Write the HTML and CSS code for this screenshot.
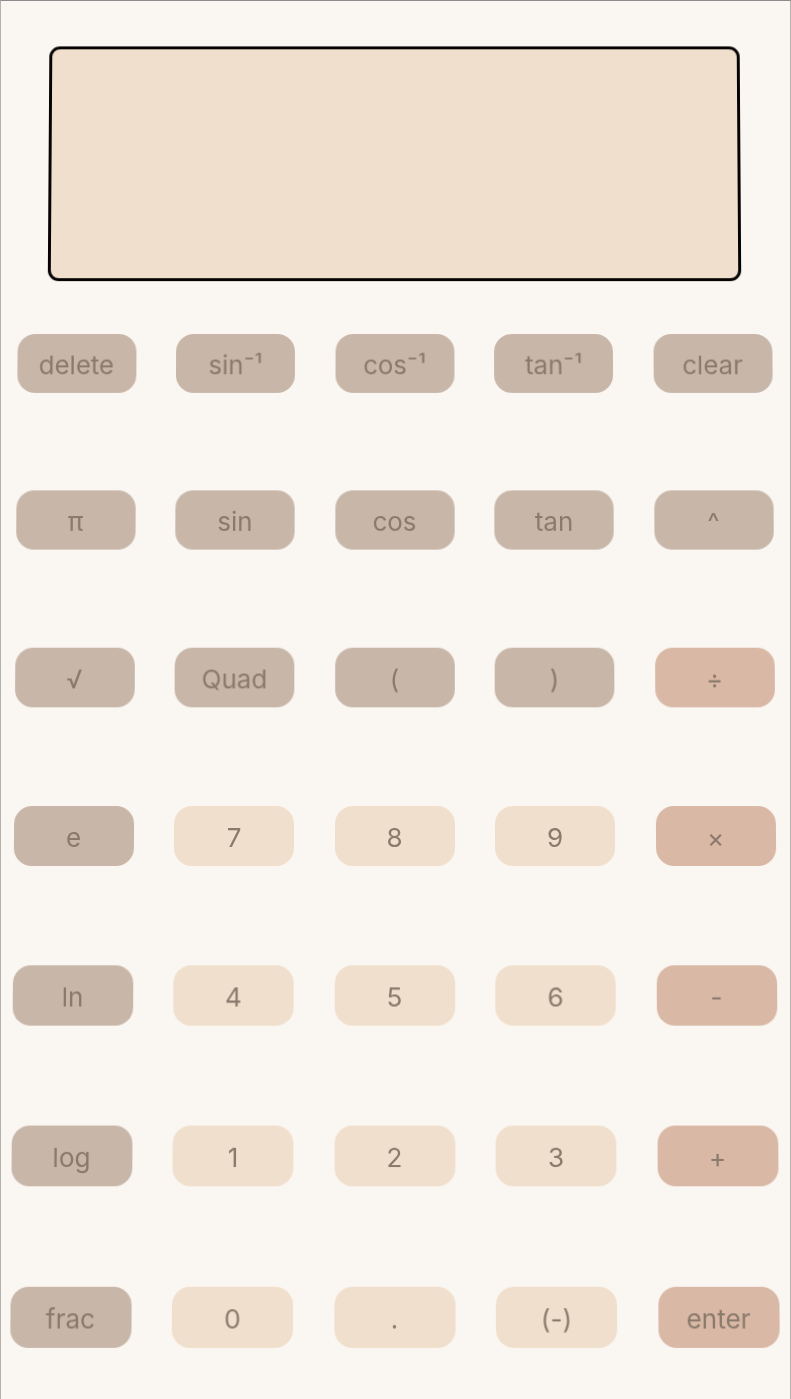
FILE: index.html
```html
<!DOCTYPE html>
<html lang="en">
<head>
<meta charset="utf-8">
<title>Calculator</title>
<link rel="stylesheet" href="styles.css">
</head>
<body>
<main class="calc">
  <section class="display"></section>
  <section class="keys">
    <button class="key fn">delete</button>
    <button class="key fn">sin⁻¹</button>
    <button class="key fn">cos⁻¹</button>
    <button class="key fn">tan⁻¹</button>
    <button class="key fn">clear</button>

    <button class="key fn">π</button>
    <button class="key fn">sin</button>
    <button class="key fn">cos</button>
    <button class="key fn">tan</button>
    <button class="key fn">^</button>

    <button class="key fn">√</button>
    <button class="key fn">Quad</button>
    <button class="key fn">(</button>
    <button class="key fn">)</button>
    <button class="key op">÷</button>

    <button class="key fn">e</button>
    <button class="key num">7</button>
    <button class="key num">8</button>
    <button class="key num">9</button>
    <button class="key op">×</button>

    <button class="key fn">ln</button>
    <button class="key num">4</button>
    <button class="key num">5</button>
    <button class="key num">6</button>
    <button class="key op">-</button>

    <button class="key fn">log</button>
    <button class="key num">1</button>
    <button class="key num">2</button>
    <button class="key num">3</button>
    <button class="key op">+</button>

    <button class="key fn">frac</button>
    <button class="key num">0</button>
    <button class="key num">.</button>
    <button class="key num">(-)</button>
    <button class="key op">enter</button>
  </section>
</main>
</body>
</html>
```

FILE: styles.css
```css
html, body {
  margin: 0;
  padding: 0;
}

body {
  width: 791px;
  height: 1399px;
  box-sizing: border-box;
  background: #faf6f1;
  border-top: 1px solid #8c8c8c;
  border-left: 1px solid #b5b2ae;
  border-right: 1px solid #b5b2ae;
  overflow: hidden;
  font-family: "Inter", "Liberation Sans", sans-serif;
}

.calc {
  display: flex;
  flex-direction: column;
  align-items: center;
  padding-top: 33px;
  padding-right: 2px;
  height: 1398px;
  box-sizing: border-box;
  transform-origin: 50% 835px;
  transform: perspective(1000px) rotateX(1.11deg);
}

.display {
  width: 701px;
  height: 241px;
  box-sizing: border-box;
  background: #f0dfcc;
  border: 3.5px solid #050403;
  border-radius: 11px;
}

.keys {
  margin-top: 54px;
  display: grid;
  grid-template-columns: repeat(5, 120px);
  grid-auto-rows: 60px;
  column-gap: 40.5px;
  row-gap: 99px;
}

.key {
  border: none;
  border-radius: 18px;
  padding: 3px 0 0;
  margin: 0;
  font-family: "Inter", "Liberation Sans", sans-serif;
  font-size: 26px;
  font-weight: 400;
  color: #8a7a6b;
  display: flex;
  align-items: center;
  justify-content: center;
}

.fn {
  background: #c8b7a9;
}

.num {
  background: #f0dfcc;
}

.op {
  background: #d9b8a6;
}
```
